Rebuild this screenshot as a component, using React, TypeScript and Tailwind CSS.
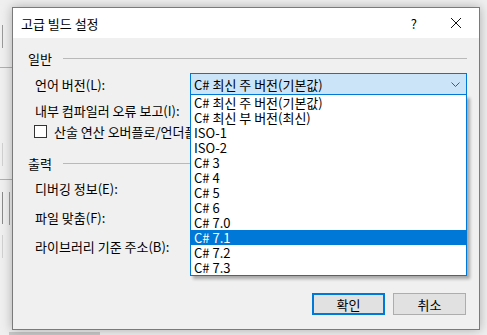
import React from 'react'

const versions = [
  'C# 최신 주 버전(기본값)',
  'C# 최신 부 버전(최신)',
  'ISO-1',
  'ISO-2',
  'C# 3',
  'C# 4',
  'C# 5',
  'C# 6',
  'C# 7.0',
  'C# 7.1',
  'C# 7.2',
  'C# 7.3',
]

const font = { fontFamily: '"Segoe UI", "Noto Sans CJK KR", "Noto Sans", sans-serif' }

function GroupHeader({ title, className }: { title: string; className?: string }) {
  return (
    <div className={'flex h-[16px] items-center pl-[15px] ' + (className ?? '')}>
      <span>{title}</span>
      <div className="ml-[11px] mr-[12px] h-px flex-1 bg-[#b9b9b9]" />
    </div>
  )
}

export default function App() {
  const selected = 'C# 7.1'

  return (
    <div className="relative h-[335px] w-[487px] overflow-hidden bg-[#efefef] text-[13px] leading-[15px] text-black" style={font}>
      {/* fragments of the window behind */}
      <div className="absolute left-0 top-[25px] h-[23px] w-[3px] border-r border-[#9a9a9a]" />
      <div className="absolute left-0 top-[67px] h-px w-[12px] bg-[#b0b0b0]" />
      <div className="absolute left-0 top-[143px] h-[23px] w-[3px] border-r border-[#d0d0d0]" />
      <div className="absolute left-0 top-[179px] h-px w-[12px] bg-[#b0b0b0]" />
      <div className="absolute left-0 top-[192px] h-[32px] w-[3px] border-r border-[#8a8a8a]" />
      <div className="absolute left-[9px] top-[192px] h-[33px] w-[4px] border-l border-[#9a9a9a]" />
      <div className="absolute left-0 top-[235px] h-[23px] w-[3px] border-r border-[#d0d0d0]" />
      <div className="absolute left-[9px] top-[332px] h-[3px] w-[91px] bg-[#c8c8c8]" />

      {/* dialog */}
      <div className="relative ml-[12px] mt-[7px] flex h-[323px] w-[468px] flex-col border border-[#7a7a7a] bg-[#f0f0f0] shadow-[0_0_10px_rgba(0,0,0,0.28)]">
        <div className="flex h-[30px] items-center bg-white pl-[8px]">
          <span className="flex-1">고급 빌드 설정</span>
          <span className="mr-[33px]">?</span>
          <svg width="12" height="12" viewBox="0 0 12 12" className="mr-[17px]">
            <path d="M1 1 L11 11 M11 1 L1 11" stroke="#111" strokeWidth="1" />
          </svg>
        </div>

        <div className="flex flex-1 flex-col">
          <GroupHeader title="일반" className="mt-[12px]" />

          <div className="mt-[7px] flex h-[22px] items-center pl-[22px]">
            <span className="w-[155px]">언어 버전(L):</span>
            <div className="relative w-[277px]">
              <div className="flex h-[22px] items-center border border-[#0078d7] bg-[#cce4f7] pl-[3px] pr-[6px]">
                <span className="flex-1">C# 최신 주 버전(기본값)</span>
                <svg width="9" height="5" viewBox="0 0 9 5">
                  <path d="M0.5 0.5 L4.5 4.5 L8.5 0.5" fill="none" stroke="#555" strokeWidth="1" />
                </svg>
              </div>
              <div className="absolute left-0 top-full z-10 w-full border-x border-b border-[#0078d7] bg-white shadow-[3px_3px_3px_rgba(0,0,0,0.3)]">
                {versions.map((v) => (
                  <div
                    key={v}
                    className={
                      'flex h-[15px] items-center pl-[3px] ' +
                      (v === selected ? 'bg-[#0078d7] text-white' : '')
                    }
                  >
                    {v}
                  </div>
                ))}
              </div>
            </div>
          </div>

          <div className="mt-[7px] flex h-[16px] items-center pl-[22px]">내부 컴파일러 오류 보고(I):</div>

          <div className="mt-[5px] flex h-[16px] items-center pl-[21px]">
            <div className="h-[13px] w-[13px] shrink-0 border border-[#333] bg-white" />
            <span className="ml-[7px] whitespace-nowrap">산술 연산 오버플로/언더플로 확인</span>
          </div>

          <GroupHeader title="출력" className="mt-[16px]" />

          <div className="mt-[9px] flex h-[16px] items-center pl-[22px]">디버깅 정보(E):</div>
          <div className="mt-[13px] flex h-[16px] items-center pl-[22px]">파일 맞춤(F):</div>
          <div className="mt-[13px] flex h-[16px] items-center pl-[22px]">라이브러리 기준 주소(B):</div>

          <div className="mt-[39px] flex justify-end gap-[8px] pr-[13px]">
            <button className="flex h-[22px] w-[73px] items-center justify-center border-2 border-[#0078d7] bg-[#e1e1e1]">
              확인
            </button>
            <button className="flex h-[22px] w-[73px] items-center justify-center border border-[#adadad] bg-[#e1e1e1]">
              취소
            </button>
          </div>
        </div>
      </div>
    </div>
  )
}
